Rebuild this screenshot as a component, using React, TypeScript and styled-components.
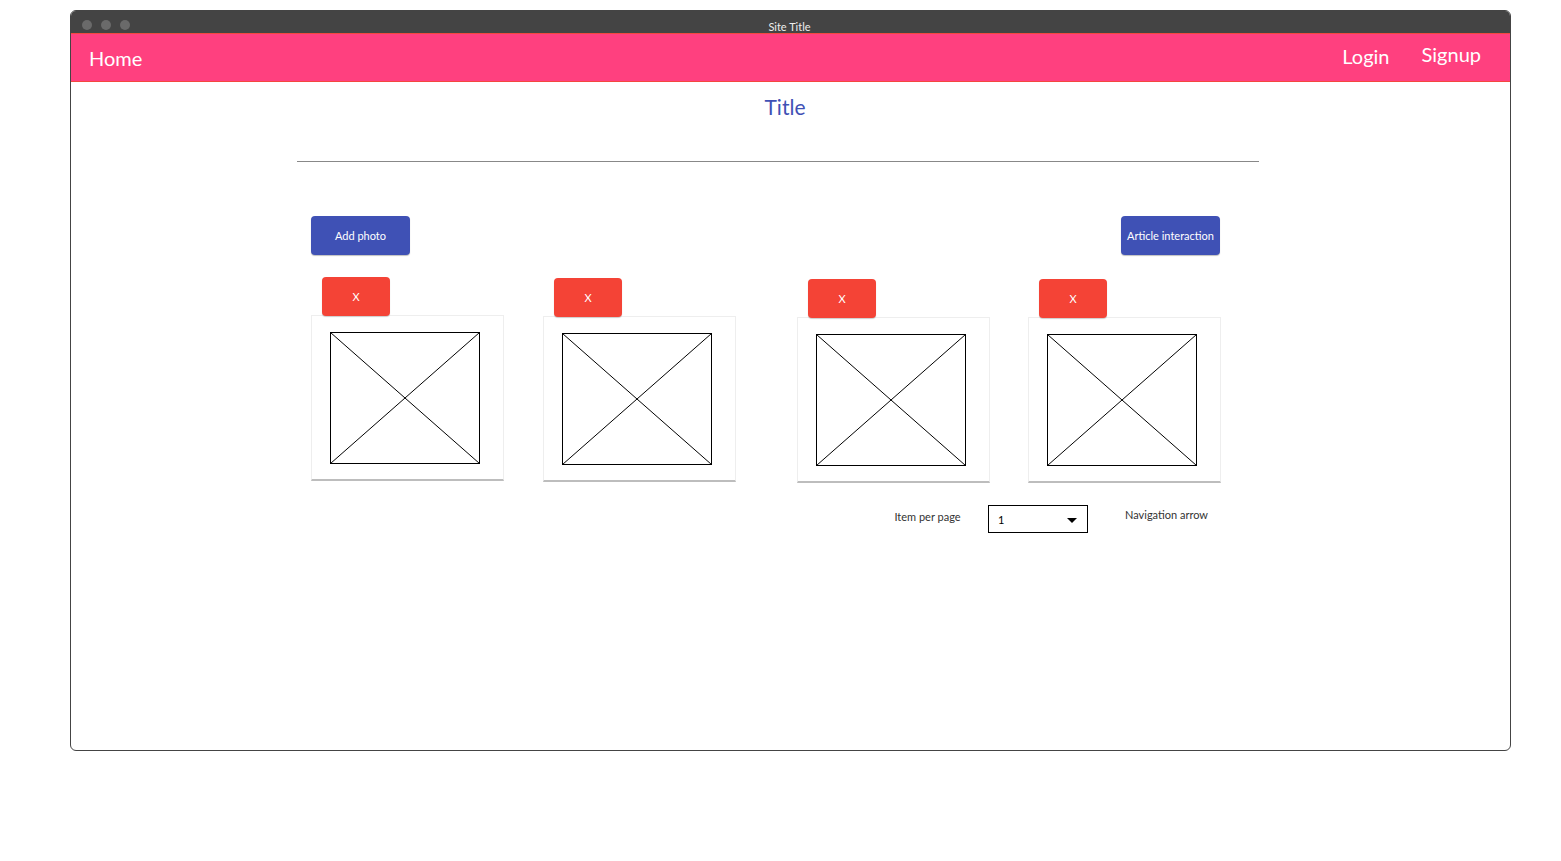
import React, { FC } from 'react';
import styled, { createGlobalStyle } from 'styled-components';

const GlobalStyle = createGlobalStyle`
    html, body {
        margin: 0;
        padding: 0;
        background: #ffffff;
        font-family: Lato, "Open Sans", sans-serif;
    }
`;

const Page = styled.div`
    padding: 10px 0 0 70px;
`;

const Window = styled.div`
    width: 1439px;
    height: 739px;
    border: 1px solid #444444;
    border-radius: 6px;
    overflow: hidden;
    display: flex;
    flex-direction: column;
    background: #ffffff;
`;

const TitleBar = styled.div`
    position: relative;
    height: 22px;
    background: #444444;
    display: flex;
    align-items: center;
    justify-content: center;
    padding-top: 1px;
    box-sizing: border-box;
`;

const Dots = styled.div`
    position: absolute;
    left: 11px;
    top: 9px;
    display: flex;
    gap: 9px;
`;

const Dot = styled.span`
    width: 10px;
    height: 10px;
    border-radius: 50%;
    background: #6a6a6a;
`;

const SiteTitle = styled.span`
    color: #eeeeee;
    font-size: 11px;
    margin-top: 7px;
    margin-left: -2px;
`;

const NavBar = styled.nav`
    height: 49px;
    box-sizing: border-box;
    background: #ff407f;
    border-top: 1px solid #f4473f;
    border-bottom: 1px solid #f4473f;
    display: flex;
    align-items: center;
    padding: 0 29px 0 18px;
`;

const NavLink = styled.span<{ $lift?: number }>`
    color: #ffffff;
    font-size: 20px;
    position: relative;
    top: ${(props) => -(props.$lift ?? 0)}px;
`;

const Spacer = styled.div`
    flex: 1;
`;

const NavRight = styled.div`
    display: flex;
    gap: 32px;
`;

const Main = styled.main`
    padding: 0 251px 0 226px;
`;

const Title = styled.h1`
    margin: 12px 0 0 0;
    height: 30px;
    text-align: center;
    font-weight: 400;
    font-size: 21px;
    color: #3f51b5;
    padding-left: 14px;
`;

const Divider = styled.hr`
    margin: 37px 0 0 0;
    border: none;
    border-top: 1px solid #888888;
`;

const Section = styled.div`
    padding: 0 39px 0 14px;
`;

const ButtonRow = styled.div`
    display: flex;
    justify-content: space-between;
    margin-top: 54px;
`;

const PrimaryButton = styled.button`
    width: 99px;
    height: 39px;
    border: none;
    border-radius: 4px;
    background: #3f51b5;
    color: #ffffff;
    font-family: inherit;
    font-size: 11px;
    padding: 0;
    box-shadow: 0 1px 1px rgba(0, 0, 0, 0.25);
`;

const CardRow = styled.div`
    display: flex;
    margin-top: 22px;
`;

const CardColumn = styled.div<{ $left: number; $down: number }>`
    display: flex;
    flex-direction: column;
    margin-left: ${(props) => props.$left}px;
    margin-top: ${(props) => props.$down}px;
`;

const RemoveButton = styled.button`
    width: 68px;
    height: 39px;
    margin-left: 11px;
    border: none;
    border-radius: 4px;
    background: #f44336;
    color: #ffffff;
    font-family: inherit;
    font-size: 11px;
    padding: 0;
    position: relative;
    z-index: 1;
    box-shadow: 0 1px 1px rgba(0, 0, 0, 0.2);
`;

const Card = styled.div`
    width: 193px;
    height: 166px;
    box-sizing: border-box;
    margin-top: -1px;
    border: 1px solid #eeeeee;
    border-bottom: 2px solid #bdbdbd;
    padding: 16px 0 0 18px;
`;

const Placeholder = styled.svg`
    display: block;
    width: 151px;
    height: 132px;
`;

const Pager = styled.div`
    display: flex;
    justify-content: flex-end;
    align-items: flex-start;
    margin-top: 22px;
    font-size: 11px;
    color: #333333;
`;

const PagerLabel = styled.div`
    width: 99px;
    text-align: center;
    margin-top: 5px;
`;

const Select = styled.div`
    width: 100px;
    height: 28px;
    box-sizing: border-box;
    margin-left: 11px;
    border: 1px solid #000000;
    display: flex;
    align-items: center;
    justify-content: space-between;
    padding: 0 10px 0 9px;
    color: #000000;
`;

const Caret = styled.span`
    width: 0;
    height: 0;
    border-left: 5px solid transparent;
    border-right: 5px solid transparent;
    border-top: 5px solid #000000;
    margin-top: 3px;
`;

const NavArrow = styled.div`
    width: 99px;
    text-align: center;
    margin: 3px 4px 0 29px;
`;

const ImageBox: FC = () => (
    <Placeholder viewBox="0 0 151 132">
        <rect x="0.5" y="0.5" width="149" height="131" fill="#ffffff" stroke="#000000" strokeWidth="1" />
        <line x1="0.5" y1="0.5" x2="149.5" y2="131.5" stroke="#000000" strokeWidth="1" />
        <line x1="149.5" y1="0.5" x2="0.5" y2="131.5" stroke="#000000" strokeWidth="1" />
    </Placeholder>
);

const cards = [
    { left: 0, down: 0 },
    { left: 39, down: 1 },
    { left: 61, down: 2 },
    { left: 38, down: 2 },
];

const App: FC = () => {
    return (
        <Page>
            <GlobalStyle />
            <Window>
                <TitleBar>
                    <Dots>
                        <Dot />
                        <Dot />
                        <Dot />
                    </Dots>
                    <SiteTitle>Site Title</SiteTitle>
                </TitleBar>
                <NavBar>
                    <NavLink>Home</NavLink>
                    <Spacer />
                    <NavRight>
                        <NavLink $lift={2}>Login</NavLink>
                        <NavLink $lift={4}>Signup</NavLink>
                    </NavRight>
                </NavBar>
                <Main>
                    <Title>Title</Title>
                    <Divider />
                    <Section>
                        <ButtonRow>
                            <PrimaryButton>Add photo</PrimaryButton>
                            <PrimaryButton>Article interaction</PrimaryButton>
                        </ButtonRow>
                        <CardRow>
                            {cards.map((card, index) => (
                                <CardColumn key={index} $left={card.left} $down={card.down}>
                                    <RemoveButton>X</RemoveButton>
                                    <Card>
                                        <ImageBox />
                                    </Card>
                                </CardColumn>
                            ))}
                        </CardRow>
                        <Pager>
                            <PagerLabel>Item per page</PagerLabel>
                            <Select>
                                <span>1</span>
                                <Caret />
                            </Select>
                            <NavArrow>Navigation arrow</NavArrow>
                        </Pager>
                    </Section>
                </Main>
            </Window>
        </Page>
    );
};

export default App;
